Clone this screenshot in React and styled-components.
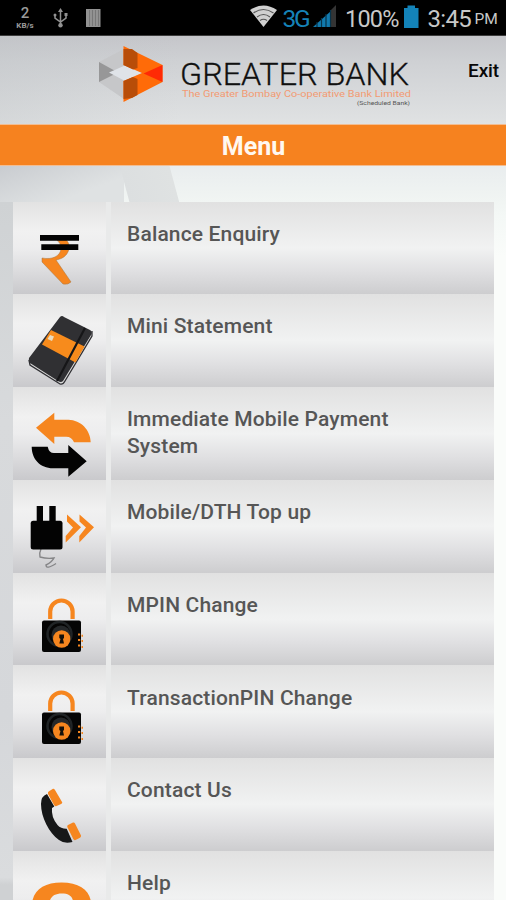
import React from 'react'
import styled, { createGlobalStyle } from 'styled-components'

const GlobalStyle = createGlobalStyle`
	* {
		box-sizing: border-box;
	}
	body {
		margin: 0;
		overflow: hidden;
		font-family: Roboto, 'Liberation Sans', sans-serif;
	}
`

const Screen = styled.div`
	width: 506px;
	height: 900px;
	overflow: hidden;
	display: flex;
	flex-direction: column;
	background: #eef1f1;
`

const StatusBar = styled.div`
	height: 36px;
	flex: none;
	display: flex;
	align-items: center;
	background: #000;
	color: #c8c8c8;
	border-bottom: 1px solid #3c3c3c;
`

const NetSpeed = styled.div`
	width: 22px;
	margin: 0 0 0 14px;
	text-align: center;
	color: #9a9a9a;
	font-size: 15px;
	font-weight: 500;
	line-height: 16px;

	small {
		display: block;
		font-size: 8px;
		font-weight: 700;
		line-height: 9px;
	}
`

const StatusIcon = styled.svg`
	flex: none;
	width: ${(p) => p.width}px;
	height: 36px;
	margin-left: ${(p) => p.$gap || 0}px;
`

const StatusText = styled.span`
	flex: none;
	margin-left: ${(p) => p.$gap || 0}px;
	width: ${(p) => p.$width}px;
	padding-top: 2px;
	color: ${(p) => p.$color || '#c8c8c8'};
	font-size: ${(p) => p.$size || 24}px;
	letter-spacing: ${(p) => p.$spacing || 0}px;
	line-height: 36px;
	white-space: nowrap;
`

const Header = styled.header`
	height: 88px;
	flex: none;
	display: flex;
	padding-left: 94px;
	background:
		linear-gradient(90deg, rgba(190, 194, 197, 0.3), transparent) 0 0 / 180px 100% no-repeat,
		linear-gradient(#c5c6ca, #cfd1d4 30%, #e0e2e3);
`

const Logo = styled.svg`
	flex: none;
	width: 324px;
	height: 88px;
`

const ExitButton = styled.button`
	margin: 23px 0 0 50px;
	padding: 0;
	height: 24px;
	border: none;
	background: none;
	color: #080808;
	font: 500 19px/24px Roboto, sans-serif;
	letter-spacing: -0.1px;
`

const TitleBar = styled.h1`
	height: 42px;
	flex: none;
	margin: 0;
	padding-left: 1px;
	border: 1px solid #f2bd92;
	border-width: 1px 0;
	background: #f6821f;
	color: #fff8f0;
	text-align: center;
	font-size: 25px;
	font-weight: 700;
	line-height: 43px;
`

const Content = styled.main`
	flex: 1;
	min-height: 0;
	overflow: hidden;
	padding: 35.5px 12px 0 13px;
	background:
		linear-gradient(75deg, transparent 24%, #dcdfe0 25%, #dfe2e2 76%, transparent 77%) 106px 0 / 86px 36px no-repeat,
		linear-gradient(160deg, #c9ccd0, #dfe2e3 70%) 0 0 / 124px 36px no-repeat,
		linear-gradient(#cfd2d4, #d8dadc 30%, #d5d7da 70%, #dadcde 92%, #cfd1d3 93%) 0 36px / 13px 100% no-repeat,
		linear-gradient(#e9edee, #f1f5f3 36px, #f4f8f6 50px, #fafcfa 90px);
`

const MenuList = styled.div`
	display: grid;
	grid-auto-rows: 92.8px;
	background: #e9eaea;
`

const MenuRow = styled.div`
	display: grid;
	grid-template-columns: 93px 1fr;
	column-gap: 5px;
`

const IconCell = styled.div`
	background: linear-gradient(#e2e2e2, #f1f1f1 32%, #ededee 50%, #dcdcde 75%, #c9c9cc);
`

const LabelCell = styled.div`
	padding: 19.2px 90px 0 16px;
	background: linear-gradient(#e1e1e1, #f1f2f2 50%, #e0e0e2 75%, #cdcdcf);
	color: #565656;
	font-size: 21px;
	font-weight: 500;
	letter-spacing: 0.15px;
	line-height: 27px;
`

const MenuIcon = styled.svg`
	display: block;
	width: 93px;
	height: 92px;
`

const Rupee = () => (
	<MenuIcon viewBox='0 0 93 92'>
		<path
			d='M44 38 H53 Q57 41 56 47 C54 55 48 57 43 58 L58 80 Q55 83 50 82 L29 60 V56 C40 58 47 54 48 47 Q48 41 44 38Z'
			fill='#f6861f'
			stroke='#a77743'
			strokeWidth='.5'
		/>
		<path d='M27 33H66V38.7H27ZM28.3 42.3H65.3V48H28.3Z' fill='#030303' />
	</MenuIcon>
)

const Notebook = () => (
	<MenuIcon viewBox='0 0 93 92'>
		<path d='M16 66 L17 71 L47 90 Q50 91 52 87 L79 42 V37' fill='#d8d8d8' stroke='#303034' strokeWidth='1.3' />
		<path d='M47 23 Q49 21 51 23 L77 36 Q80 38 78 41 L50 87 Q48 89 45 87 L17 69 Q15 67 16 64Z' fill='#303033' />
		<path d='M38 36 L71.5 52.5 L62.5 68.5 L29 50.5Z' fill='#f78b1c' />
		<path d='M72 34 L44 87' stroke='#161618' strokeWidth='2.2' />
		<path d='M37 41 L41 42.5 L39 47 L34.5 45Z' fill='#eadcbf' />
	</MenuIcon>
)

const Transfer = () => (
	<MenuIcon viewBox='0 0 93 92'>
		<path
			d='M23 40.7 L41.3 25.7 V32.7 H55.3 C68 33 77.5 43 77.7 55.3 H61 Q59 49.7 53 49.7 H41.3 V57Z'
			fill='#f6861f'
		/>
		<path
			d='M18.7 59.7 H34.7 Q36 66 41 66 H55.3 V58 L73.7 74.3 L55.3 89.7 V81.3 H40 C27 81 18.7 72 18.7 59.7Z'
			fill='#030303'
		/>
	</MenuIcon>
)

const Plug = () => (
	<MenuIcon viewBox='0 0 93 92'>
		<path
			d='M28 69 Q26 73 27 77 Q34 79 41 78 Q39 82 33 85 Q33 90 43 83.5'
			fill='none'
			stroke='#858587'
			strokeWidth='1.4'
		/>
		<path d='M23.7 26H30V42H23.7ZM36.3 26H42.7V42H36.3Z' fill='#030303' />
		<rect x='17.7' y='40.7' width='31.8' height='28.8' rx='2.5' fill='#030303' />
		<path
			d='M54 34.5 L68 47.3 L52.7 62.5 V56 L60 47.5 L54 41.5ZM66.5 34.5 L81 47.3 L66.3 62.5 V56 L73 47.5 L66.5 41.5Z'
			fill='#f6861f'
		/>
	</MenuIcon>
)

const Padlock = () => (
	<MenuIcon viewBox='0 0 93 92'>
		<path d='M37.2 46 V38.5 A11.2 11 0 0 1 59.6 38.5 V46' fill='none' stroke='#f6861f' strokeWidth='4.2' />
		<rect x='29' y='47.5' width='39' height='31.5' rx='2' fill='#050505' />
		<circle cx='46.5' cy='61' r='12' fill='none' stroke='#202426' strokeWidth='2.5' />
		<circle cx='48' cy='62' r='9.5' fill='#25282a' />
		<circle cx='48.7' cy='66' r='8.7' fill='#f6861f' />
		<path d='M46.3 61.5H51V65L50 66L51 70.5H46.3L47.5 66L46.3 65Z' fill='#14100b' />
		<path
			d='M65 61.5h2.2M68.5 62.8h1.5M65 67h2.2M68.5 68h1.5M65 72.5h2.2M68.5 74h1.5'
			stroke='#f6861f'
			strokeWidth='2'
		/>
	</MenuIcon>
)

const Phone = () => (
	<MenuIcon viewBox='0 0 93 92'>
		<path
			d='M34 36 Q28 38 28 46 C28 59 36 75 46 82 Q51 86 59.5 84 L53.7 70.8 Q48 71 44.5 67 Q38 59 39 50 L41.3 48.5Z'
			fill='#161718'
		/>
		<path
			d='M36 33.3 L40 30.8 Q41 30.5 42 32 L49.3 44.5 Q49 46 47 46.5 L43 48.3 Q42 48.5 41 47 L35 36Q34.5 34 36 33.3Z'
			fill='#f6861f'
		/>
		<path
			d='M55 67 L60 64.6 Q61.4 64.3 62 65.5 L68 77.5 Q68.3 79 67 79.8 L62.5 82 Q61 82.5 60.3 81 L54.3 69Q54 67.7 55 67Z'
			fill='#f6861f'
		/>
	</MenuIcon>
)

const Question = () => (
	<MenuIcon viewBox='0 0 93 92'>
		<path
			d='M19 52 C21 38 32 31.5 48.5 31.5 C67 31.5 78 40 78 53 C78 66 60 67 58 80 H38 C38 62 60 64 60 51 C60 45 55 42.5 49 42.5 C41 42.5 37 46 36 53Z'
			fill='#f6861f'
		/>
	</MenuIcon>
)

const items = [
	{ label: 'Balance Enquiry', icon: Rupee },
	{ label: 'Mini Statement', icon: Notebook },
	{ label: 'Immediate Mobile Payment System', icon: Transfer },
	{ label: 'Mobile/DTH Top up', icon: Plug },
	{ label: 'MPIN Change', icon: Padlock },
	{ label: 'TransactionPIN Change', icon: Padlock },
	{ label: 'Contact Us', icon: Phone },
	{ label: 'Help', icon: Question },
]

const BankLogo = () => (
	<Logo viewBox='94 36 324 88'>
		<path d='M99 62 L124 49 L138 55 V92 L124 99 L99 82Z' fill='#c6c7c9' />
		<path d='M99 62 L118 72.5 L99 82Z' fill='#979798' />
		<path d='M109 72.5 L126 65 L142 73 L125 81Z' fill='#dfe3e8' />
		<path d='M123.5 46 L162.5 65 V82 L123.5 102 V81 L142 73 L123.5 65Z' fill='#ff6b08' />
		<path d='M123.5 49 L132 49 L137.5 53 V68 L133 69.5 L123.5 65ZM123.5 81 L133 77 L137.5 79 V95 L132 98 L123.5 99Z' fill='#b84d08' />
		<path d='M143.5 73.5 L162.5 65 V82Z' fill='#ff2a05' />
		<text
			x='180'
			y='84.8'
			fontSize='31'
			fontWeight='300'
			textLength='229'
			lengthAdjust='spacingAndGlyphs'
			fill='#101010'
			stroke='#101010'
			strokeWidth='.3'
		>
			GREATER BANK
		</text>
		<text x='182' y='97.3' fontSize='9.5' textLength='229' lengthAdjust='spacingAndGlyphs' fill='#f39a72'>
			The Greater Bombay Co-operative Bank Limited
		</text>
		<text x='357' y='104.5' fontSize='6' textLength='53' lengthAdjust='spacingAndGlyphs' fill='#555'>
			(Scheduled Bank)
		</text>
	</Logo>
)

export default function App() {
	return (
		<>
			<GlobalStyle />
			<Screen>
				<StatusBar>
					<NetSpeed>
						2<small>KB/s</small>
					</NetSpeed>
					<StatusIcon width={16} viewBox='0 0 16 36' $gap={17} fill='none' stroke='#929292' strokeWidth='1.5'>
						<path d='M7.5 10V25M2 15V18L7.5 22L13 18V14' />
						<path d='M7.5 8l2.5 4h-5z' fill='#929292' stroke='none' />
						<circle cx='7.5' cy='25.3' r='2.2' fill='#929292' stroke='none' />
						<circle cx='2' cy='15' r='1.5' fill='#929292' stroke='none' />
						<path d='M11.5 13h3v3h-3z' fill='#929292' stroke='none' />
					</StatusIcon>
					<StatusIcon width={16} viewBox='0 0 16 36' $gap={16}>
						<path d='M1 9H15.5V27H1Z' fill='#929292' />
						<path d='M4.5 10V26M7.5 10V26M10.5 10V26M13.5 10V26' stroke='#777' />
					</StatusIcon>
					<StatusIcon width={28} viewBox='0 0 28 36' $gap={148.5} fill='none'>
						<path d='M0 10Q13.5 1 27 10L13.5 27Z' fill='#d0d0d0' />
						<path d='M3.5 13Q13.5 6 23.5 13M7 17Q13.5 12 20 17M10 20.5Q13.5 18 17 20.5' stroke='#555' strokeWidth='1.1' />
					</StatusIcon>
					<StatusText $gap={5} $width={29.5} $color='#1583b8' $size={24.5} $spacing={-2.2}>
						3G
					</StatusText>
					<StatusIcon width={26} viewBox='0 0 26 36'>
						<path d='M1 27L19 11V27Z' fill='#1179ad' />
						<path d='M19 10L24 5V27H19Z' fill='#343434' />
						<path d='M5 22V27M9.5 18V27M14 14V27M18.5 10V27' stroke='#07334a' strokeWidth='1.2' />
					</StatusIcon>
					<StatusText $gap={7} $width={55} $size={23.5} $spacing={-0.8}>
						100%
					</StatusText>
					<StatusIcon width={16} viewBox='0 0 16 36' $gap={4}>
						<path d='M0 8H3.5V5.5H11V8H14.5V28H0Z' fill='#1383b9' />
					</StatusIcon>
					<StatusText $gap={7.5} $width={47} $size={24} $spacing={-0.7}>
						3:45
					</StatusText>
					<StatusText $width={26} $size={15.5}>
						PM
					</StatusText>
				</StatusBar>
				<Header>
					<BankLogo />
					<ExitButton>Exit</ExitButton>
				</Header>
				<TitleBar>Menu</TitleBar>
				<Content>
					<MenuList>
						{items.map(({ label, icon: Icon }) => (
							<MenuRow key={label}>
								<IconCell>
									<Icon />
								</IconCell>
								<LabelCell>{label}</LabelCell>
							</MenuRow>
						))}
					</MenuList>
				</Content>
			</Screen>
		</>
	)
}
